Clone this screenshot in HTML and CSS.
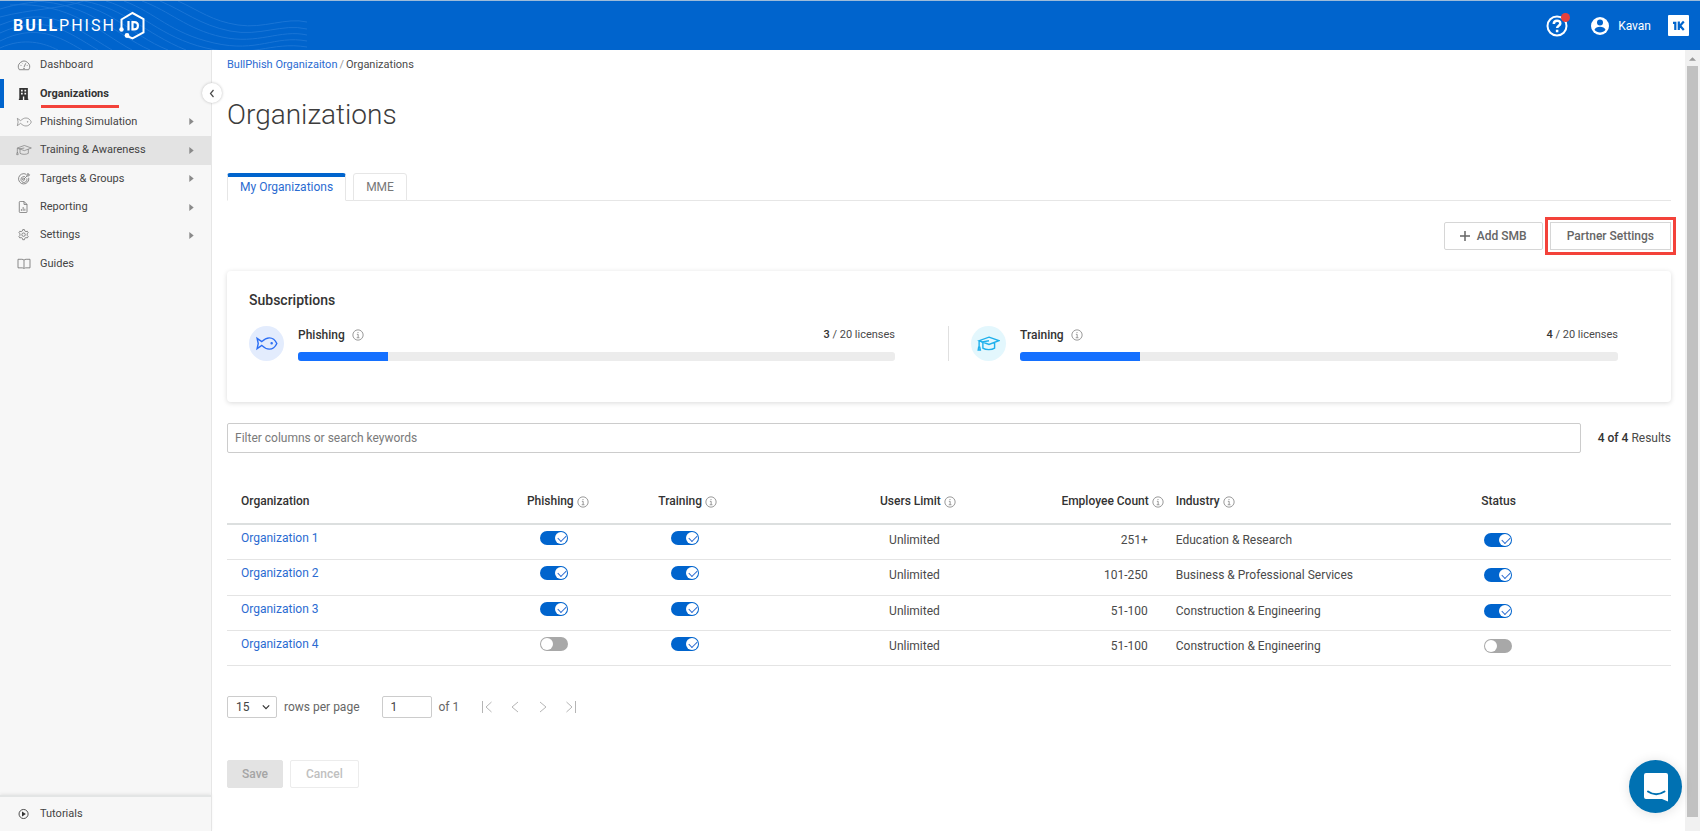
FILE: index.html
```html
<!DOCTYPE html>
<html lang="en">
<head>
<meta charset="utf-8">
<title>Organizations - BullPhish ID</title>
<link rel="stylesheet" href="styles.css">
</head>
<body>
<svg class="symbols" aria-hidden="true">
  <symbol id="fish" viewBox="0 0 24 16"><path d="M7 6 2 2.500 3.200 8 2 13.500 7 10C9.500 12.500 12 14 15 14c3.500 0 6.300-2.200 8-6-1.700-3.800-4.500-6-8-6-3 0-5.500 1.500-8 4z"/><circle cx="17.500" cy="7.800" r=".6"/></symbol>
  <symbol id="cap" viewBox="0 0 24 16"><path d="M12.500 1.200 23 5 12.500 9 2 5zM2 5v7.500M1 15l.5-3h1.200l.6 3zM6 6.800v6.200c3 2 9.500 2 12.500 0V6.800M12.500 5 4 6.500"/></symbol>
  <symbol id="info" viewBox="0 0 14 14"><circle cx="7" cy="7" r="6"/><path d="M5.700 6.200H7.200V10M5.500 10.200h3.200M7 3.500v1.200"/></symbol>
  <symbol id="caret" viewBox="0 0 5 8"><path d="M0 0 5 4 0 8z"/></symbol>
</svg>

<header class="topbar">
  <svg class="waves" viewBox="0 0 307 49" preserveAspectRatio="none" aria-hidden="true">
    <path d="M0 8C20 2 30 2 42 0M0 16C30 8 60 8 84 0M0 24C50 4 70 24 112 49M0 32C44 12 66 30 98 49M0 40C36 22 60 36 82 49M0 47C24 36 44 42 58 49M60 0C110 4 130 34 168 49M84 0C126 8 144 32 186 49M106 0C140 10 160 36 206 47S270 40 307 46M124 0C156 12 170 32 214 42S274 34 307 40M142 0C170 10 186 28 222 36S280 28 307 34M160 0C184 10 200 24 230 30S282 22 307 28M178 0C200 10 212 20 238 24S286 16 307 21M34 0C90 2 116 34 150 49M10 4C70 0 100 32 132 49"/>
  </svg>
  <a class="brand" href="#" aria-label="BullPhish ID">
    <span class="brand-text"><b>BULL</b>PHISH</span>
    <svg class="brand-mark" viewBox="0 0 28 30" aria-hidden="true">
      <path class="mark-line" d="M3.500 18V8.500L14.500 2 25.500 8v13.500L14.500 27.500 9 25"/>
      <circle cx="3.500" cy="18.500" r="2.200"/><circle cx="9" cy="24.500" r="2.400"/>
      <path class="mark-id" d="M10.500 10v9.500M14.500 11.200v7.100h1.700c2.600 0 3.700-1.500 3.700-3.600s-1.100-3.500-3.700-3.500z"/>
    </svg>
  </a>
  <div class="top-actions">
    <button class="icon-button help" aria-label="Help">
      <svg viewBox="0 0 22 22" aria-hidden="true"><circle cx="11" cy="11" r="9.500"/><path class="mark-q" d="M7.800 8.900c0-4.200 6.500-4.100 6.500-.5 0 2.300-3.200 2.300-3.200 4.700M11.100 14.800v2.400"/></svg>
      <span class="dot"></span>
    </button>
    <button class="user">
      <svg viewBox="0 0 20 20" aria-hidden="true"><circle class="disc" cx="10" cy="10" r="9"/><circle class="person" cx="10" cy="6.500" r="3"/><path class="person" d="M4.500 13.800c1.200-4 9.800-4 11 0-2.500 3.600-8.500 3.600-11 0z"/></svg>
      Kavan
    </button>
    <button class="icon-button one" aria-label="Apps">
      <svg viewBox="0 0 21 21" aria-hidden="true"><rect width="21" height="21" rx="1"/><path d="M5 7.800h2.300v7.200M10.800 6.500v8.500M15.800 6.500l-3.800 4.200 3.800 4.300"/></svg>
    </button>
  </div>
</header>

<div class="shell">
  <aside class="sidebar">
    <nav class="menu">
      <a href="#"><svg viewBox="0 0 16 14"><path d="M2.500 12.500a6.500 6.500 0 1 1 11 0zM8 9.500 10 5M4 7.500h1M5.500 4.500l.6.600M11.200 7.500h1M7 11h2"/></svg>Dashboard</a>
      <a href="#" class="active"><svg viewBox="0 0 16 14"><path class="solid" d="M2.500 0h10v12.500h.5V14H2v-1.500h.5zM4.500 2v2h2V2zM8.500 2v2h2V2zM4.500 5.500v2h2v-2zM8.500 5.500v2h2v-2zM6.700 10V14h1.600V10z" fill-rule="evenodd"/></svg>Organizations</a>
      <a href="#"><svg><use href="#fish"/></svg>Phishing Simulation<svg class="caret"><use href="#caret"/></svg></a>
      <a href="#" class="hover"><svg><use href="#cap"/></svg>Training &amp; Awareness<svg class="caret"><use href="#caret"/></svg></a>
      <a href="#"><svg viewBox="0 0 16 14"><path d="M10.500 1.500a6 6 0 1 0 3 4M9 4.200a3.500 3.500 0 1 0 2.200 2M7.500 7.500l4-4V1.500l1.500-1V2h1.500l-1 1.500h-2"/><circle cx="7.500" cy="7.300" r="1.300"/></svg>Targets &amp; Groups<svg class="caret"><use href="#caret"/></svg></a>
      <a href="#"><svg viewBox="0 0 16 14"><path d="M2.500 1.500q0-1 1-1H8l3.500 3.500v8.500q0 1-1 1h-7q-1 0-1-1zM8 .5V4h3.500M5 11.500v-2M7 11.500V7M9 11.500V9"/></svg>Reporting<svg class="caret"><use href="#caret"/></svg></a>
      <a href="#"><svg viewBox="0 0 16 14"><path d="M6.500.700h2l.5 1.700 1.200.7 1.700-.5 1 1.800-1.200 1.200v1.800l1.200 1.300-1 1.700-1.700-.4-1.200.7-.5 1.800h-2L6 10.700 4.800 10l-1.700.4-1-1.700 1.200-1.300V5.600L2.100 4.400l1-1.800 1.700.5L6 2.400z"/><circle cx="7.500" cy="6.600" r="2"/></svg>Settings<svg class="caret"><use href="#caret"/></svg></a>
      <a href="#"><svg viewBox="0 0 16 14"><path d="M8 2.500Q7 1.500 5.500 1.500H1v10h5q1.500 0 2 1 .5-1 2-1h5v-10h-4.500Q9 1.500 8 2.500zV12"/></svg>Guides</a>
    </nav>
    <nav class="menu-foot">
      <a href="#"><svg viewBox="0 0 16 14"><circle cx="7.500" cy="7" r="5.300"/><path class="solid" d="M5.700 4v6l4.500-3z"/></svg>Tutorials</a>
    </nav>
    <button class="collapse" aria-label="Collapse menu"><svg viewBox="0 0 6 9"><path d="M4.500 1 1.500 4.500l3 3.500"/></svg></button>
  </aside>

  <main class="content">
    <nav class="crumbs"><a href="#">BullPhish Organizaiton</a><span class="slash">/</span><span>Organizations</span></nav>
    <h1>Organizations</h1>

    <div class="tabs" role="tablist">
      <button class="tab selected" role="tab" aria-selected="true">My Organizations</button>
      <button class="tab" role="tab" aria-selected="false">MME</button>
    </div>

    <div class="toolbar">
      <button class="btn"><svg viewBox="0 0 10 10"><path d="M5 0v10M0 5h10"/></svg>Add SMB</button>
      <button class="btn marked">Partner Settings</button>
    </div>

    <section class="card">
      <h2>Subscriptions</h2>
      <div class="plans">
        <div class="plan">
          <span class="badge phish"><svg><use href="#fish"/></svg></span>
          <div class="usage">
            <div class="usage-head"><h3>Phishing <svg class="info"><use href="#info"/></svg></h3><span><b>3</b> / 20 licenses</span></div>
            <div class="bar"><div class="fill" style="width:15%"></div></div>
          </div>
        </div>
        <div class="plan">
          <span class="badge train"><svg><use href="#cap"/></svg></span>
          <div class="usage">
            <div class="usage-head"><h3>Training <svg class="info"><use href="#info"/></svg></h3><span><b>4</b> / 20 licenses</span></div>
            <div class="bar"><div class="fill" style="width:20%"></div></div>
          </div>
        </div>
      </div>
    </section>

    <div class="search">
      <input type="text" placeholder="Filter columns or search keywords" aria-label="Filter columns or search keywords">
      <span><b>4 of 4</b> Results</span>
    </div>

    <table class="grid">
      <colgroup><col class="c-org"><col class="c-phish"><col class="c-train"><col class="c-limit"><col class="c-count"><col class="c-ind"><col class="c-status"></colgroup>
      <thead>
        <tr>
          <th>Organization</th>
          <th>Phishing <svg class="info"><use href="#info"/></svg></th>
          <th>Training <svg class="info"><use href="#info"/></svg></th>
          <th class="num">Users Limit <svg class="info"><use href="#info"/></svg></th>
          <th class="num">Employee Count <svg class="info"><use href="#info"/></svg></th>
          <th class="ind">Industry <svg class="info"><use href="#info"/></svg></th>
          <th>Status</th>
        </tr>
      </thead>
      <tbody>
        <tr>
          <td class="lead"><a href="#">Organization 1</a></td>
          <td class="lead sw"><input type="checkbox" class="toggle" aria-label="Phishing, Organization 1" checked></td>
          <td class="lead sw"><input type="checkbox" class="toggle" aria-label="Training, Organization 1" checked></td>
          <td class="num">Unlimited</td><td class="num">251+</td><td class="ind">Education &amp; Research</td>
          <td class="st"><input type="checkbox" class="toggle" aria-label="Status, Organization 1" checked></td>
        </tr>
        <tr>
          <td class="lead"><a href="#">Organization 2</a></td>
          <td class="lead sw"><input type="checkbox" class="toggle" aria-label="Phishing, Organization 2" checked></td>
          <td class="lead sw"><input type="checkbox" class="toggle" aria-label="Training, Organization 2" checked></td>
          <td class="num">Unlimited</td><td class="num">101-250</td><td class="ind">Business &amp; Professional Services</td>
          <td class="st"><input type="checkbox" class="toggle" aria-label="Status, Organization 2" checked></td>
        </tr>
        <tr>
          <td class="lead"><a href="#">Organization 3</a></td>
          <td class="lead sw"><input type="checkbox" class="toggle" aria-label="Phishing, Organization 3" checked></td>
          <td class="lead sw"><input type="checkbox" class="toggle" aria-label="Training, Organization 3" checked></td>
          <td class="num">Unlimited</td><td class="num">51-100</td><td class="ind">Construction &amp; Engineering</td>
          <td class="st"><input type="checkbox" class="toggle" aria-label="Status, Organization 3" checked></td>
        </tr>
        <tr>
          <td class="lead"><a href="#">Organization 4</a></td>
          <td class="lead sw"><input type="checkbox" class="toggle" aria-label="Phishing, Organization 4"></td>
          <td class="lead sw"><input type="checkbox" class="toggle" aria-label="Training, Organization 4" checked></td>
          <td class="num">Unlimited</td><td class="num">51-100</td><td class="ind">Construction &amp; Engineering</td>
          <td class="st"><input type="checkbox" class="toggle" aria-label="Status, Organization 4"></td>
        </tr>
      </tbody>
    </table>

    <div class="pager">
      <span class="select"><select id="rows"><option>15</option><option>30</option></select><svg viewBox="0 0 10 6"><path d="M1 1l4 4 4-4"/></svg></span>
      <label for="rows">rows per page</label>
      <input id="page" type="text" value="1">
      <label for="page">of 1</label>
      <div class="steps">
        <button aria-label="First page"><svg viewBox="0 0 12 12"><path d="M1.500 0v12M10.500 1 5 6l5.500 5"/></svg></button>
        <button aria-label="Previous page"><svg viewBox="0 0 12 12"><path d="M9 1 3 6l6 5"/></svg></button>
        <button aria-label="Next page"><svg viewBox="0 0 12 12"><path d="M3 1l6 5-6 5"/></svg></button>
        <button aria-label="Last page"><svg viewBox="0 0 12 12"><path d="M1.500 1 7 6l-5.500 5M10.500 0v12"/></svg></button>
      </div>
    </div>

    <div class="form-actions">
      <button class="btn save" disabled>Save</button>
      <button class="btn cancel" disabled>Cancel</button>
    </div>
  </main>

  <div class="scroll" aria-hidden="true"><svg viewBox="0 0 8 4"><path d="M0 4 4 0l4 4z"/></svg><div class="thumb"></div></div>
</div>

<button class="chat" aria-label="Open chat"><svg viewBox="0 0 26 30"><path class="bubble" d="M3 1h20q2 0 2 2v26.500l-6-2.500H3q-2 0-2-2V3q0-2 2-2z"/><path class="smile" d="M5 19.500q8 5.500 16.500 0"/></svg></button>
</body>
</html>
```
FILE: styles.css
```css
* { box-sizing: border-box; }
body {
  margin: 0;
  height: 100vh;
  display: flex;
  flex-direction: column;
  overflow: hidden;
  background: #fff;
  color: #4a4a4a;
  font: 12px/18px Roboto, "Liberation Sans", sans-serif;
}
button, input, select { font: inherit; color: inherit; margin: 0; }
button { background: none; border: 0; padding: 0; }
a { color: #2b6bd1; text-decoration: none; }
b, h2, h3, th { font-weight: 500; color: #333; }
svg { fill: none; stroke: currentColor; flex: none; }
.symbols { position: absolute; width: 0; height: 0; }

/* Top bar */
.topbar {
  position: relative;
  flex: none;
  height: 50px;
  border-top: 1px solid #9dbbd9;
  background: #0064cd;
  color: #fff;
  display: flex;
  align-items: center;
  justify-content: space-between;
  padding: 0 11px 0 13px;
}
.waves { position: absolute; left: 0; top: 0; width: 307px; height: 49px; stroke: #2f83dd; opacity: .55; }
.brand { position: relative; display: flex; align-items: center; gap: 2px; color: #fff; }
.brand-text { font-family: Roboto, sans-serif; font-size: 16px; letter-spacing: 2px; }
.brand-text b { color: #fff; font-weight: 700; }
.brand-mark { width: 28px; height: 30px; fill: #fff; stroke: none; }
.mark-line { fill: none; stroke: #fff; stroke-width: 2; }
.mark-id { fill: none; stroke: #fff; stroke-width: 2.200; }
.top-actions { display: flex; align-items: center; }
.icon-button { position: relative; display: flex; color: #fff; }
.help svg { width: 22px; height: 22px; stroke-width: 2; }
.mark-q { stroke-width: 2.500; }
.dot { position: absolute; right: -2px; top: -2px; width: 9px; height: 9px; border-radius: 50%; background: #e8403a; }
.user { display: flex; align-items: center; gap: 8px; margin: 0 17px 0 22px; color: #fff; }
.user svg { width: 20px; height: 20px; stroke: none; }
.disc { fill: #fff; }
.person { fill: #0064cd; }
.one svg { width: 21px; height: 21px; fill: #fff; stroke: none; }
.one path { fill: none; stroke: #0064cd; stroke-width: 2.200; }

.shell { flex: 1; min-height: 0; display: flex; }

/* Sidebar */
.sidebar {
  position: relative;
  flex: none;
  width: 212px;
  display: flex;
  flex-direction: column;
  justify-content: space-between;
  background: #f7f7f7;
  border-right: 1px solid #e6e6e6;
}
.menu { display: flex; flex-direction: column; height: 228px; padding-top: 1px; }
.menu a, .menu-foot a {
  position: relative;
  flex: 1;
  display: flex;
  align-items: center;
  gap: 8px;
  padding: 0 17px 0 16px;
  font-size: 11px;
  color: #444;
}
.menu svg, .menu-foot svg { width: 16px; height: 12px; stroke: #777; }
.menu .solid, .menu-foot .solid { fill: #333; stroke: none; }
.menu-foot svg { stroke: #333; }
.menu .caret { width: 5px; height: 7px; margin-left: auto; fill: #8a8a8a; stroke: none; }
.menu .active { font-weight: 700; color: #333; border-left: 4px solid #0064cd; padding-left: 12px; }
.menu .active::after {
  content: "";
  position: absolute;
  left: 37px;
  bottom: 0;
  width: 78px;
  height: 3px;
  background: #f3423a;
}
.menu .hover { background: #e3e3e3; }
.menu-foot { display: flex; height: 36px; border-top: 2px solid #e3e5e5; box-shadow: 0 -1px 3px #e4e4e4; }
.collapse {
  position: absolute;
  right: -11px;
  top: 33px;
  width: 20px;
  height: 20px;
  border-radius: 50%;
  background: #fff;
  box-shadow: 0 0 3px #bbb;
  display: flex;
  align-items: center;
  justify-content: center;
}
.collapse svg { width: 6px; height: 9px; stroke-width: 1.200; }

/* Content */
.content { flex: 1; min-width: 0; padding: 6px 14px 0 15px; }
.crumbs { display: flex; gap: 2px; font-size: 11px; }
.slash { color: #999; }
h1 { margin: 24px 0 41px; font-size: 28px; line-height: 34px; font-weight: 300; color: #3c3c3c; }
.tabs { display: flex; gap: 7px; height: 28px; border-bottom: 1px solid #e6e6e6; }
.tab {
  height: 28px;
  padding: 0 12px;
  border: 1px solid #e6e6e6;
  border-radius: 3px 3px 0 0;
  background: #fff;
  color: #777;
}
.tab.selected { border-top: 4px solid #0064cd; border-bottom-color: #fff; padding-bottom: 3px; color: #2b6bd1; }
.toolbar { display: flex; justify-content: flex-end; gap: 7px; margin: 21px 0; }
.btn {
  display: flex;
  align-items: center;
  gap: 7px;
  height: 28px;
  padding: 0 15px;
  border: 1px solid #d6d6d6;
  border-radius: 2px;
  font-weight: 500;
  color: #666;
}
.btn svg { width: 10px; height: 10px; stroke-width: 1.500; }
.marked { padding: 0 16px; border-radius: 0; outline: 3px solid #f3423a; outline-offset: 2px; }

.card {
  height: 131px;
  padding-top: 20px;
  border-radius: 4px;
  box-shadow: 0 1px 5px rgba(0, 0, 0, .15);
}
h2 { margin: 0 22px 17px; font-size: 14px; line-height: 18px; }
h3 { display: flex; align-items: center; gap: 7px; margin: 0; font-size: 12px; }
.info { width: 12px; height: 12px; stroke: #888; }
.plans { display: grid; grid-template-columns: 1fr 1fr; }
.plan { display: flex; gap: 14px; padding: 0 53px 0 22px; }
.plan:first-child { border-right: 1px solid #e0e0e0; }
.badge { width: 35px; height: 35px; border-radius: 50%; display: flex; align-items: center; justify-content: center; }
.badge svg { width: 23px; height: 15px; stroke-width: 1.500; }
.phish { background: #e3ecfd; color: #2a6df4; }
.train { background: #e3f7fd; color: #1fb0ec; }
.usage { flex: 1; display: flex; flex-direction: column; justify-content: space-between; }
.usage-head { display: flex; justify-content: space-between; font-size: 11px; }
.bar { height: 9px; border-radius: 3px; background: #ececec; overflow: hidden; }
.fill { height: 100%; background: #1470ff; }

.search { display: flex; align-items: center; gap: 17px; margin-top: 21px; }
.search input { flex: 1; height: 30px; padding: 0 7px; border: 1px solid #ccc; border-radius: 2px; }
.search input::placeholder { color: #7a7a7a; opacity: 1; }

/* Table */
.grid { width: 100%; height: 190px; margin-top: 23px; table-layout: fixed; border-collapse: collapse; }
.c-org { width: 19.800%; }
.c-phish { width: 9.100%; }
.c-train { width: 13.100%; }
.c-limit { width: 9.100%; }
.c-count { width: 14.400%; }
.c-ind { width: 20.400%; }
.c-status { width: 14.100%; }
.grid th { height: 48px; padding: 2px 9px 0 14px; text-align: left; white-space: nowrap; border-bottom: 2px solid #dcdfdf; }
.grid th .info { vertical-align: -3px; }
.grid td { padding: 6px 14px 0; vertical-align: top; border-bottom: 1px solid #e4e4e4; white-space: nowrap; }
.grid .num { text-align: right; }
.grid td.num { padding-right: 25px; }
.grid .ind { padding-left: 3px; }
.grid td.lead { padding-top: 4px; }
.grid td.sw { padding-left: 27px; }
.grid td.st { padding-left: 17px; }
.toggle {
  appearance: none;
  position: relative;
  display: block;
  width: 28px;
  height: 14px;
  margin: 2px 0;
  border-radius: 7px;
  background: #a8a8a8;
}
.toggle::before {
  content: "";
  position: absolute;
  left: 1px;
  top: 1px;
  width: 12px;
  height: 12px;
  border-radius: 50%;
  background: #fff;
}
.toggle:checked { background: #0064cd; }
.toggle:checked::before { left: 15px; }
.toggle:checked::after {
  content: "";
  position: absolute;
  left: 18px;
  top: 4px;
  width: 7px;
  height: 4px;
  border: solid #2b6bd1;
  border-width: 0 0 1px 1px;
  transform: rotate(-45deg);
}

/* Pager */
.pager { display: flex; align-items: center; margin-top: 30px; color: #666; }
.pager select, .pager input { width: 50px; height: 22px; padding: 0 8px; border: 1px solid #ccc; border-radius: 2px; background: #fff; color: #444; }
.select { position: relative; display: flex; }
.pager select { appearance: none; }
.select svg { position: absolute; right: 7px; top: 8px; width: 8px; height: 6px; stroke: #333; stroke-width: 1.500; }
.pager label { margin: 0 22px 0 7px; }
.steps { display: flex; gap: 16px; color: #bbb; }
.steps button { display: flex; color: #b5b5b5; }
.steps svg { width: 12px; height: 12px; }
.form-actions { display: flex; gap: 7px; margin-top: 42px; }
.save { padding: 0 14px; background: #e3e3e3; border-color: #e3e3e3; color: #a5a5a5; }
.cancel { border-color: #ececec; color: #c0c0c0; }

/* Scroll strip */
.scroll { width: 15px; padding: 7px 2px 14px; background: #f1f1f1; display: flex; flex-direction: column; align-items: center; gap: 5px; }
.scroll svg { width: 7px; height: 4px; fill: #999; stroke: none; }
.thumb { flex: 1; width: 11px; background: #c1c1c1; }

.chat {
  position: fixed;
  right: 18px;
  bottom: 18px;
  width: 53px;
  height: 53px;
  border-radius: 50%;
  background: #0071b2;
  box-shadow: 0 1px 12px rgba(0, 0, 0, .12);
  display: flex;
  align-items: center;
  justify-content: center;
}
.chat svg { width: 26px; height: 30px; }
.bubble { fill: #fff; stroke: none; }
.smile { stroke: #0071b2; stroke-width: 2; stroke-linecap: round; }
```
